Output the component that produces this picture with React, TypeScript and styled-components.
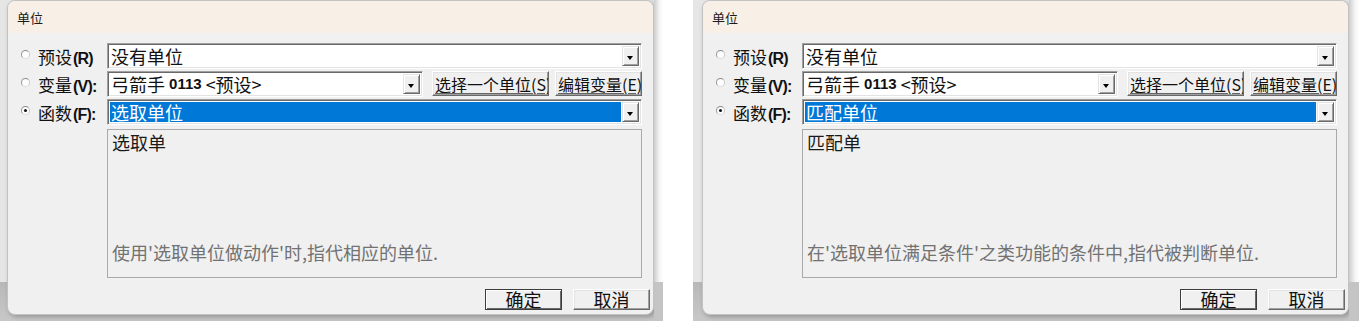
import React from 'react';
import styled, { createGlobalStyle } from 'styled-components';

const GlobalStyle = createGlobalStyle`
  html, body {
    margin: 0;
    padding: 0;
    background: #fff;
  }
  body {
    font-family: "Noto Sans CJK SC", "Noto Sans", sans-serif;
    color: #000;
  }
`;

const dialogs = [
  {
    lead: 7,
    tail: 9,
    fn: '选取单位',
    heading: '选取单',
    note: "使用'选取单位做动作'时,指代相应的单位.",
  },
  {
    lead: 9,
    tail: 10,
    fn: '匹配单位',
    heading: '匹配单',
    note: "在'选取单位满足条件'之类功能的条件中,指代被判断单位.",
  },
];

const App = () => {
  return (
    <>
      <GlobalStyle />
      <Page>
        {dialogs.map((d) => (
          <Shot key={d.fn} $lead={d.lead}>
            <Window>
              <TitleBar>单位</TitleBar>
              <Form>
                <Choice>
                  <Radio />
                  <Label>
                    预设<Key>(R)</Key>
                  </Label>
                </Choice>
                <Combo>
                  <ComboValue>没有单位</ComboValue>
                  <DropButton />
                </Combo>

                <Choice>
                  <Radio />
                  <Label>
                    变量<Key>(V):</Key>
                  </Label>
                </Choice>
                <VarLine>
                  <Combo $width={316}>
                    <ComboValue>
                      弓箭手 <Num>0113</Num> &lt;预设&gt;
                    </ComboValue>
                    <DropButton />
                  </Combo>
                  <Push $width={117}>选择一个单位(S)</Push>
                  <Push $width={87}>编辑变量(E)</Push>
                </VarLine>

                <Choice>
                  <Radio $on />
                  <Label>
                    函数<Key>(F):</Key>
                  </Label>
                </Choice>
                <Combo>
                  <ComboValue $selected>{d.fn}</ComboValue>
                  <DropButton />
                </Combo>

                <Spacer />
                <Desc>
                  <DescHeading>{d.heading}</DescHeading>
                  <DescNote>{d.note}</DescNote>
                </Desc>
              </Form>
              <Footer>
                <DialogButton $default>确定</DialogButton>
                <DialogButton>取消</DialogButton>
              </Footer>
            </Window>
            <Tail $width={d.tail} />
          </Shot>
        ))}
      </Page>
    </>
  );
};

export default App;

const Page = styled.div`
  display: flex;
  gap: 30px;
  width: 1359px;
  height: 321px;
  overflow: hidden;
`;

const Shot = styled.div<{ $lead: number }>`
  display: flex;
  align-items: flex-start;
  height: 321px;
  padding-left: ${(p) => p.$lead}px;
  background: linear-gradient(
    to bottom,
    #e6e6e6 0,
    #e6e6e6 282px,
    #b8b8b8 282px,
    #c8c8c8 100%
  );
`;

const Tail = styled.div<{ $width: number }>`
  width: ${(p) => p.$width}px;
  height: 100%;
  background:
    linear-gradient(to bottom, transparent 282px, #c4c4c4 282px),
    linear-gradient(to right, #cdcdcd, #f4f4f4 60%, #fff);
`;

const Window = styled.div`
  width: 647px;
  height: 315px;
  box-sizing: border-box;
  border: 1px solid #c2c2c2;
  border-radius: 8px;
  overflow: hidden;
  background: #f0f0f0;
  box-shadow: 2px 2px 5px rgba(0, 0, 0, 0.25);
  display: flex;
  flex-direction: column;
`;

const TitleBar = styled.div`
  height: 32px;
  display: flex;
  align-items: center;
  padding-left: 9px;
  background: #f8efe6;
  font-size: 13px;
  color: #1b1b1b;
`;

const Form = styled.div`
  display: grid;
  grid-template-columns: 99px 535px;
  grid-template-rows: 26px 26px 26px 0 149px;
  row-gap: 2px;
  padding-top: 10px;
`;

const Choice = styled.div`
  display: flex;
  align-items: center;
  padding-left: 13px;
  gap: 8px;
`;

const Radio = styled.span<{ $on?: boolean }>`
  position: relative;
  width: 9px;
  height: 9px;
  box-sizing: border-box;
  border-radius: 50%;
  border: 1px solid;
  border-color: #8c8c8c #c8c8c8 #dcdcdc #9a9a9a;
  background: #fdfdfd;
  margin-top: -4px;

  &::after {
    content: '';
    display: ${(p) => (p.$on ? 'block' : 'none')};
    position: absolute;
    left: 2px;
    top: 2px;
    width: 3px;
    height: 3px;
    border-radius: 50%;
    background: #111;
  }
`;

const Label = styled.span`
  font-size: 17px;
  color: #111;
  white-space: nowrap;
`;

const Key = styled.span`
  font-family: "Liberation Sans", sans-serif;
  font-weight: 700;
  font-size: 16px;
  letter-spacing: -0.8px;
  margin-left: 1px;
`;

const VarLine = styled.div`
  display: flex;
  align-items: flex-start;
  gap: 9px;

  & > button:last-child {
    margin-left: -3px;
  }
`;

const Combo = styled.div<{ $width?: number }>`
  display: flex;
  width: ${(p) => (p.$width ? `${p.$width}px` : '100%')};
  height: 26px;
  box-sizing: border-box;
  border: 1px solid;
  border-color: #a0a0a0 #ffffff #ffffff #a0a0a0;
  box-shadow: inset 1px 1px #696969, inset -1px -1px #e3e3e3;
  background: #fff;
  padding: 2px;
`;

const ComboValue = styled.div<{ $selected?: boolean }>`
  flex: 1;
  display: flex;
  align-items: center;
  padding-left: 1px;
  margin-right: 1px;
  font-size: 18px;
  line-height: 20px;
  white-space: pre;
  background: ${(p) => (p.$selected ? '#0078d7' : 'transparent')};
  color: ${(p) => (p.$selected ? '#fff' : '#111')};
`;

const Num = styled.b`
  font-family: "Liberation Sans", sans-serif;
  font-size: 15px;
  font-weight: 700;
`;

const DropButton = styled.div`
  position: relative;
  width: 17px;
  box-sizing: border-box;
  background: #f0f0f0;
  border: 1px solid;
  border-color: #e3e3e3 #696969 #696969 #e3e3e3;
  box-shadow: inset 1px 1px #fff, inset -1px -1px #a0a0a0;

  &::before {
    content: '';
    position: absolute;
    left: 4px;
    top: 9px;
    border-style: solid;
    border-width: 4px 3.5px 0 3.5px;
    border-color: #000 transparent transparent transparent;
  }
`;

const Push = styled.button<{ $width: number }>`
  width: ${(p) => p.$width}px;
  height: 25px;
  box-sizing: border-box;
  padding: 0 0 0 2px;
  margin: 0;
  background: #f0f0f0;
  border: 1px solid;
  border-color: #fff #696969 #696969 #fff;
  box-shadow: inset -1px -1px #a0a0a0, inset 1px 1px #e3e3e3;
  font-family: "Noto Sans CJK SC", sans-serif;
  font-size: 16px;
  line-height: 22px;
  color: #111;
  text-align: left;
  white-space: nowrap;
  overflow: hidden;
  text-decoration: underline;
  text-underline-offset: 2px;
  text-decoration-color: #666;
`;

const Spacer = styled.div`
  grid-column: 1 / -1;
  margin-top: -3px;
`;

const Desc = styled.div`
  grid-column: 2;
  box-sizing: border-box;
  border: 1px solid #a9a9a9;
  display: flex;
  flex-direction: column;
  justify-content: space-between;
  padding: 1px 4px 14px;
  font-size: 18px;
  line-height: 22px;
`;

const DescHeading = styled.div`
  color: #1a1a1a;
`;

const DescNote = styled.div`
  color: #727272;
  white-space: nowrap;
`;

const Footer = styled.div`
  flex: 1;
  display: flex;
  justify-content: flex-end;
  align-items: flex-end;
  gap: 11px;
  padding: 0 3px 4px 0;
`;

const DialogButton = styled.button<{ $default?: boolean }>`
  width: 77px;
  height: 21px;
  box-sizing: border-box;
  padding: 0;
  margin: 0;
  background: #f0f0f0;
  border: 1px solid;
  border-color: ${(p) => (p.$default ? '#3c3c3c' : '#fff #696969 #696969 #fff')};
  box-shadow: ${(p) =>
    p.$default
      ? 'inset 1px 1px #fff, inset -1px -1px #696969'
      : 'inset -1px -1px #a0a0a0, inset 1px 1px #e3e3e3'};
  font-family: "Noto Sans CJK SC", sans-serif;
  font-size: 18px;
  line-height: 19px;
  color: #111;
  text-align: center;
`;
